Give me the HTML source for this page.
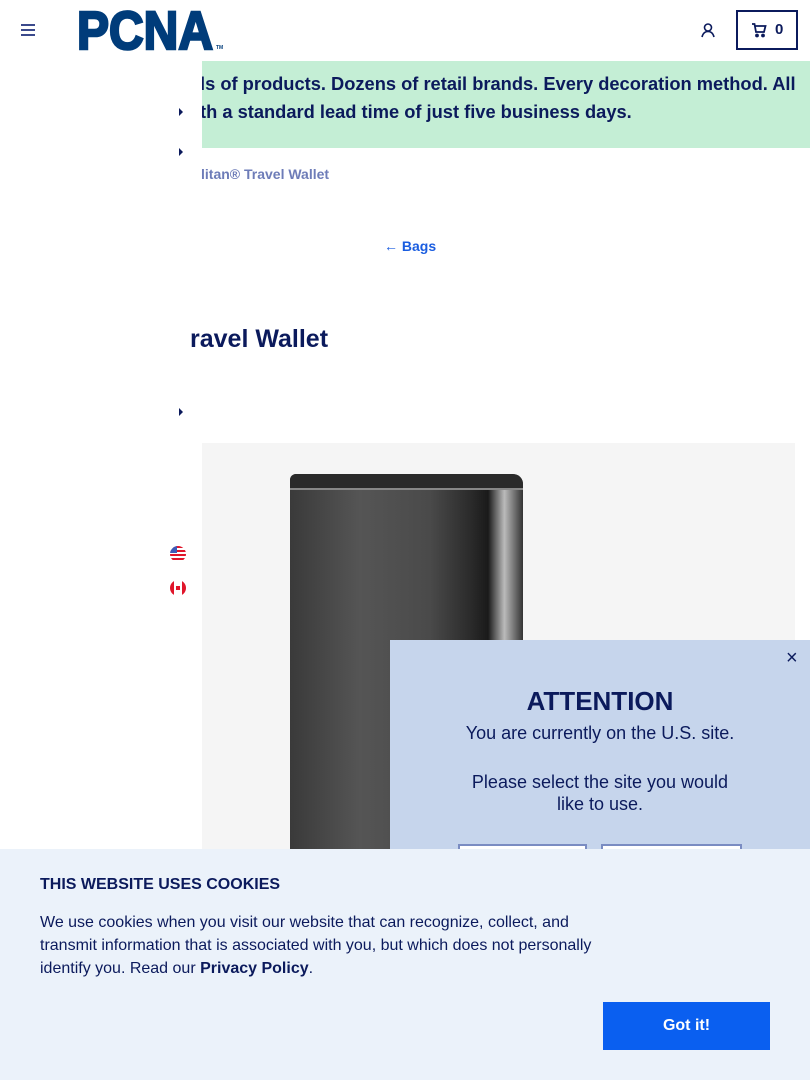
<!DOCTYPE html>
<html><head><meta charset="utf-8"><style>
*{margin:0;padding:0;box-sizing:border-box}
body{width:810px;height:1080px;overflow:hidden;position:relative;background:#fff;font-family:"Liberation Sans",Arial,sans-serif;color:#0b1a5c}
.abs{position:absolute}
.tri{position:absolute;width:0;height:0;border-top:4px solid transparent;border-bottom:4px solid transparent;border-left:4px solid #0b1a5c}
</style></head><body>
<div class="abs" style="left:21px;top:24px;width:14px;height:2px;background:#3b4a8c;box-shadow:0 5px 0 #3b4a8c,0 10px 0 #3b4a8c"></div>
<svg class="abs" style="left:76px;top:8px" width="150" height="44" viewBox="0 0 150 44"><text x="1" y="41" font-family="Liberation Sans" font-weight="900" font-size="54" fill="#003c7a" stroke="#003c7a" stroke-width="2.5" textLength="136" lengthAdjust="spacingAndGlyphs">PCNA</text><text x="140" y="41" font-family="Liberation Sans" font-weight="bold" font-size="5" fill="#003c7a">TM</text></svg>
<svg class="abs" style="left:700px;top:22px" width="16" height="16" viewBox="0 0 16 16" fill="none" stroke="#0b1a5c" stroke-width="1.6"><circle cx="8" cy="5.5" r="3.5"/><path d="M2 15c1-4 3-5.5 6-5.5s5 1.5 6 5.5"/></svg>
<div class="abs" style="left:736px;top:10px;width:62px;height:40px;border:2px solid #0b1a5c"></div>
<svg class="abs" style="left:751px;top:22px" width="16" height="16" viewBox="0 0 16 16" fill="none" stroke="#0b1a5c" stroke-width="1.8"><path d="M1 2h2.5l1.5 8h8l1.5-6H4.5"/><circle cx="6" cy="13.5" r="1" fill="#0b1a5c"/><circle cx="12" cy="13.5" r="1" fill="#0b1a5c"/></svg>
<div class="abs" style="left:775px;top:21px;font:bold 15px 'Liberation Sans'">0</div>
<div class="abs" style="left:202px;top:61px;width:608px;height:87px;background:#c4eed5"></div>
<div class="abs" style="left:202px;top:70px;width:608px;height:56px;overflow:hidden;font:bold 18.3px/28px 'Liberation Sans';white-space:nowrap"><div style="margin-left:-2px">ls of products. Dozens of retail brands. Every decoration method. All<br>th a standard lead time of just five business days.</div></div>
<div class="tri" style="left:179px;top:108px"></div>
<div class="tri" style="left:179px;top:148px"></div>
<div class="tri" style="left:179px;top:408px"></div>
<div class="abs" style="left:201px;top:166px;font:bold 14px 'Liberation Sans';color:#6d7cb8">litan® Travel Wallet</div>
<div class="abs" style="left:384px;top:238px;font:bold 14px 'Liberation Sans';color:#1a5de0">← Bags</div>
<div class="abs" style="left:190px;top:325px;font:bold 25px 'Liberation Sans';color:#0b1a5c">ravel Wallet</div>
<div class="abs" style="left:170px;top:546px;width:16px;height:16px;border-radius:50%;background:repeating-linear-gradient(#e0162b 0 2px,#fff 2px 4px);overflow:hidden"><div style="width:7px;height:7px;background:#3d5bb8"></div></div>
<div class="abs" style="left:170px;top:580px;width:16px;height:16px;border-radius:50%;background:linear-gradient(90deg,#e0162b 0 4px,#fff 4px 12px,#e0162b 12px)"><div style="position:absolute;left:6px;top:6px;width:4px;height:4px;background:#e0162b"></div></div>
<div class="abs" style="left:202px;top:443px;width:593px;height:420px;background:#f5f5f5"></div>
<div class="abs" style="left:290px;top:474px;width:233px;height:400px;border-radius:6px 10px 0 0;background:linear-gradient(90deg,#3a3a3a,#555 30%,#4a4a4a 60%,#2a2a2a 78%,#1a1a1a 85%,#bbb 92%,#333)"></div>
<div class="abs" style="left:290px;top:474px;width:233px;height:16px;border-radius:6px 10px 0 0;background:#2a2a2a;border-bottom:2px solid #888"></div>
<div class="abs" style="left:390px;top:640px;width:420px;height:220px;background:#c6d5ec"></div>
<div class="abs" style="left:786px;top:647px;font:20px 'Liberation Sans'">×</div>
<div class="abs" style="left:390px;top:686px;width:420px;text-align:center;font:bold 26px 'Liberation Sans'">ATTENTION</div>
<div class="abs" style="left:390px;top:722px;width:420px;text-align:center;font:18px/22px 'Liberation Sans';color:#0b1a5c">You are currently on the U.S. site.<br><br><span style="display:block;margin-top:5px">Please select the site you would<br>like to use.</span></div>
<div class="abs" style="left:458px;top:844px;width:129px;height:20px;border:2px solid #7a8cc2;background:#fff"></div>
<div class="abs" style="left:601px;top:844px;width:141px;height:20px;border:2px solid #7a8cc2;background:#fff"></div>
<div class="abs" style="left:0;top:849px;width:810px;height:231px;background:#ebf2fa"></div>
<div class="abs" style="left:40px;top:876px;font:bold 16px 'Liberation Sans'">THIS WEBSITE USES COOKIES</div>
<div class="abs" style="left:40px;top:911px;width:570px;font:16px/23px 'Liberation Sans';color:#0b1a5c">We use cookies when you visit our website that can recognize, collect, and transmit information that is associated with you, but which does not personally identify you. Read our <b>Privacy Policy</b>.</div>
<div class="abs" style="left:603px;top:1002px;width:167px;height:48px;background:#0a5ff0;color:#fff;font:bold 16px/48px 'Liberation Sans';text-align:center">Got it!</div>
</body></html>
